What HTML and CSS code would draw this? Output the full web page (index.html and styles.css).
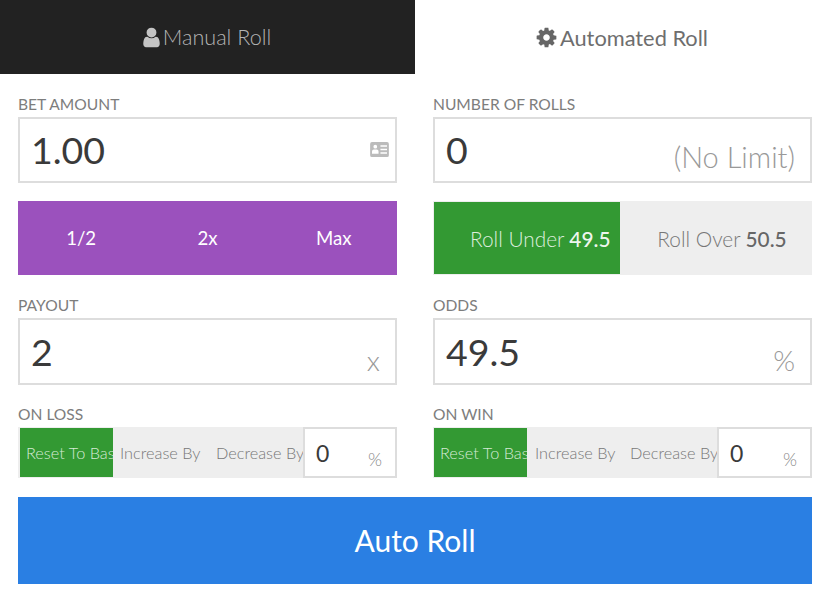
FILE: index.html
```html
<!DOCTYPE html>
<html lang="en">
<head>
<meta charset="utf-8">
<title>Roll</title>
<link rel="stylesheet" href="styles.css">
</head>
<body>
<nav class="tabs">
  <div class="tab tab-dark">
    <svg class="tab-icon" viewBox="0 0 1792 1792"><path d="M1536 1399q0 109-62.5 187t-150.5 78h-854q-88 0-150.5-78t-62.5-187q0-85 8.5-160.5t31.5-152 58.5-131 94-89 134.5-34.5q131 128 313 128t313-128q76 0 134.5 34.5t94 89 58.5 131 31.5 152 8.5 160.5zm-256-887q0 159-112.5 271.5t-271.5 112.5-271.5-112.5-112.5-271.5 112.5-271.5 271.5-112.5 271.5 112.5 112.5 271.5z"/></svg>
    <span>Manual Roll</span>
  </div>
  <div class="tab tab-light">
    <svg class="tab-icon" viewBox="0 0 1792 1792"><path d="M1152 896q0-106-75-181t-181-75-181 75-75 181 75 181 181 75 181-75 75-181zm512-109v222q0 12-8 23t-20 13l-185 28q-19 54-39 91 35 50 107 138 10 12 10 25t-9 23q-27 37-99 108t-94 71q-12 0-26-9l-138-108q-44 23-91 38-16 136-29 186-7 28-36 28h-222q-14 0-24.5-8.5t-11.5-21.5l-28-184q-49-16-90-37l-141 107q-10 9-25 9-14 0-25-11-126-114-165-168-7-10-7-23 0-12 8-23 15-21 51-66.5t54-70.5q-27-50-41-99l-183-27q-13-2-21-12.5t-8-23.5v-222q0-12 8-23t19-13l186-28q14-46 39-92-40-57-107-138-10-12-10-24 0-10 9-23 26-36 98.5-107.5t94.5-71.5q13 0 26 10l138 107q44-23 91-38 16-136 29-186 7-28 36-28h222q14 0 24.5 8.5t11.5 21.5l28 184q49 16 90 37l142-107q9-9 24-9 13 0 25 10 129 119 165 170 7 8 7 22 0 12-8 23-15 21-51 66.5t-54 70.5q26 50 41 98l183 28q13 2 21 12.5t8 23.5z"/></svg>
    <span>Automated Roll</span>
  </div>
</nav>
<main class="panel">
  <div class="grid">
    <section class="group">
      <div class="label">BET AMOUNT</div>
      <div class="field">
        <span class="value">1.00</span>
        <svg class="card-icon" viewBox="0 0 20 16"><path fill-rule="evenodd" d="M2 0h16a2 2 0 0 1 2 2v12a2 2 0 0 1-2 2H2a2 2 0 0 1-2-2V2a2 2 0 0 1 2-2zM5.500 3a2 2 0 1 0 0 4 2 2 0 0 0 0-4zM2 12.500h7V10a2 2 0 0 0-2-2H4a2 2 0 0 0-2 2zM11 3.500v1.500h7V3.500zM11 7.250v1.500h7v-1.500zM11 11v1.500h7V11z"/></svg>
      </div>
    </section>
    <section class="group">
      <div class="label">NUMBER OF ROLLS</div>
      <div class="field">
        <span class="value">0</span>
        <span class="unit unit-long">(No Limit)</span>
      </div>
    </section>
    <div class="actions">
      <span>1/2</span><span>2x</span><span>Max</span>
    </div>
    <div class="roll-toggle">
      <div class="roll-opt roll-on">Roll Under <b>49.5</b></div>
      <div class="roll-opt roll-off">Roll Over <b>50.5</b></div>
    </div>
    <section class="group">
      <div class="label">PAYOUT</div>
      <div class="field field-tall">
        <span class="value">2</span>
        <span class="unit">x</span>
      </div>
    </section>
    <section class="group">
      <div class="label">ODDS</div>
      <div class="field field-tall">
        <span class="value">49.5</span>
        <span class="unit">%</span>
      </div>
    </section>
    <section class="group">
      <div class="label">ON LOSS</div>
      <div class="seg-row">
        <div class="seg seg-on">Reset To Base</div>
        <div class="seg seg-mid">Increase By</div>
        <div class="seg seg-last">Decrease By</div>
        <div class="mini"><span class="mini-value">0</span><span class="mini-unit">%</span></div>
      </div>
    </section>
    <section class="group group-right">
      <div class="label">ON WIN</div>
      <div class="seg-row">
        <div class="seg seg-on">Reset To Base</div>
        <div class="seg seg-mid">Increase By</div>
        <div class="seg seg-last">Decrease By</div>
        <div class="mini"><span class="mini-value">0</span><span class="mini-unit">%</span></div>
      </div>
    </section>
  </div>
  <button class="auto" type="button">Auto Roll</button>
</main>
</body>
</html>
```
FILE: styles.css
```css
* { box-sizing: border-box; }
html, body { margin: 0; padding: 0; background: #fff; }
body {
  width: 830px;
  height: 602px;
  overflow: hidden;
  font-family: "Lato", "Noto Sans", sans-serif;
  color: #777;
}
.tabs { display: flex; height: 74px; }
.tab {
  flex: 0 0 50%;
  display: flex;
  align-items: center;
  justify-content: center;
  font-size: 21.6px;
  font-weight: 300;
}
.tab-dark { background: #222; color: #b4b4b4; padding-right: 4px; }
.tab-dark .tab-icon { fill: #c4c4c4; }
.tab-light { color: #6e6e6e; font-weight: 400; font-size: 21.8px; gap: 2px; padding-right: 2px; }
.tab-light .tab-icon { fill: #666; }
.tab-icon { width: 23px; height: 23px; }

.panel { padding: 0 18px; }
.grid {
  display: grid;
  grid-template-columns: 379px 379px;
  column-gap: 36px;
  padding-top: 20px;
}
.label {
  height: 23px;
  line-height: 20px;
  font-size: 15.6px;
  color: #7d7d7d;
}
.field {
  height: 66px;
  border: 2px solid #ddd;
  display: flex;
  align-items: center;
  justify-content: space-between;
  padding: 0 15px 0 11px;
  background: #fff;
}
.field-tall { height: 67px; }
.value {
  font-size: 37.500px;
  color: #3a3a3a;
  font-weight: 400;
  line-height: 1;
}
.unit {
  font-size: 28px;
  font-weight: 300;
  color: #999;
  align-self: flex-end;
  padding-bottom: 6px;
}
.unit-long { font-size: 29px; padding-bottom: 7px; }
.card-icon { width: 19px; height: 15px; fill: #bbb; margin-bottom: 2px; margin-right: -9px; }

.actions {
  margin-top: 18px;
  height: 74px;
  background: #9b51bd;
  color: #fff;
  display: grid;
  grid-template-columns: 1fr 1fr 1fr;
  align-items: center;
  justify-items: center;
  font-size: 18.6px;
  font-weight: 400;
}
.roll-toggle {
  margin-top: 18px;
  height: 74px;
  display: grid;
  grid-template-columns: 187px 192px;
  background: #eee;
  font-size: 20.8px;
  font-weight: 300;
}
.roll-opt {
  display: flex;
  align-items: center;
  justify-content: center;
  gap: 5px;
  color: #777;
}
.roll-off { padding-left: 12px; }
.roll-opt b { font-weight: 500; color: #666; }
.roll-on {
  background: #339933;
  color: #ddeedd;
  padding-left: 36px;
  justify-content: flex-start;
  margin: 1px 0 1px 1px;
}
.roll-on b { color: #eef6ee; }

.grid > .group:nth-child(n+5) { padding-top: 20px; }
.grid > .group:nth-child(n+7) { padding-top: 19px; }
.seg-row {
  display: flex;
  height: 51px;
  background: #eee;
}
.seg {
  height: 100%;
  display: flex;
  align-items: center;
  font-size: 16.300px;
  font-weight: 300;
  color: #777;
  white-space: nowrap;
  overflow: hidden;
}
.seg-on {
  width: 93px;
  margin: 1px 0 1px 2px;
  height: 49px;
  background: #339933;
  color: #d5ead5;
  padding-left: 6px;
}
.group-right .seg-on { margin-left: 1px; }
.seg-mid { width: 95px; padding-left: 7px; }
.group-right .seg-mid { padding-left: 8px; }
.seg-last { width: 95px; padding-left: 8px; }
.mini {
  flex: 1;
  background: #fff;
  border: 2px solid #ddd;
  display: flex;
  align-items: center;
  justify-content: space-between;
  padding: 0 13px 0 11px;
}
.mini-value { font-size: 23px; color: #3a3a3a; }
.mini-unit { font-size: 18px; font-weight: 300; color: #888; padding-top: 12px; }

.auto {
  display: block;
  width: 794px;
  height: 87px;
  margin: 19px 0 0;
  padding: 0 0 2px;
  border: 0;
  background: #2a7fe3;
  color: #fff;
  font-family: inherit;
  font-size: 30px;
  font-weight: 400;
}
```
